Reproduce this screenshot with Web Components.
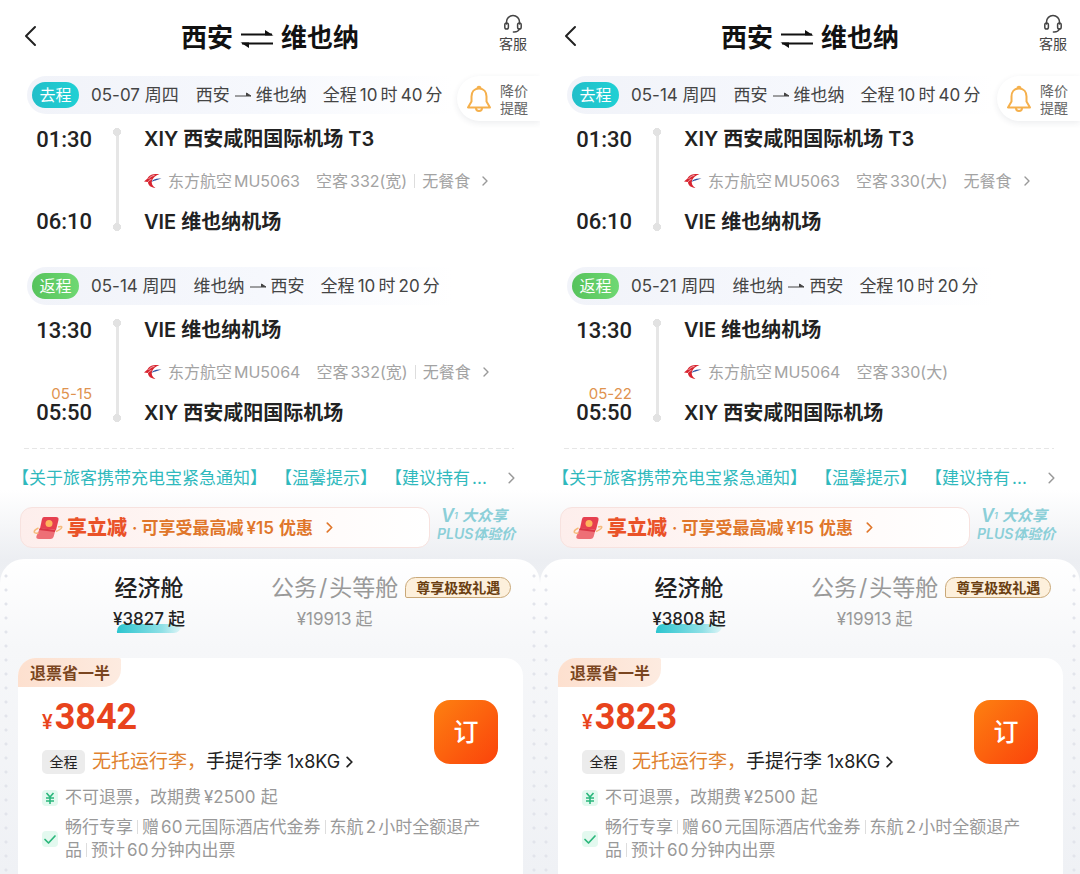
<!DOCTYPE html>
<html lang="zh-CN">
<head>
<meta charset="utf-8">
<meta name="viewport" content="width=device-width, initial-scale=1">
<title>航班预订</title>
<style>
body { margin: 0; background: #fff; font-family: Inter, "Noto Sans CJK SC", sans-serif; color: #222; }
</style>
</head>
<body>
<fare-compare>
  <fare-screen from="西安" to="维也纳">
    <flight-leg slot="legs" kind="out" label="去程" date="05-07 周四" from="西安" to="维也纳" total="全程10时40分"
      dep="01:30" arr="06:10" origin="XIY 西安咸阳国际机场 T3" dest="VIE 维也纳机场" flight="东方航空MU5063" plane="空客332(宽)" meal="无餐食" divided></flight-leg>
    <flight-leg slot="legs" kind="back" label="返程" date="05-14 周四" from="维也纳" to="西安" total="全程10时20分"
      dep="13:30" arr="05:50" nextday="05-15" origin="VIE 维也纳机场" dest="XIY 西安咸阳国际机场" flight="东方航空MU5064" plane="空客332(宽)" meal="无餐食" divided></flight-leg>
    <notice-promo slot="notice"></notice-promo>
    <cabin-tabs slot="tabs" price="3827"></cabin-tabs>
    <fare-card slot="fares" price="3842"></fare-card>
  </fare-screen>
  <fare-screen from="西安" to="维也纳">
    <flight-leg slot="legs" kind="out" label="去程" date="05-14 周四" from="西安" to="维也纳" total="全程10时40分"
      dep="01:30" arr="06:10" origin="XIY 西安咸阳国际机场 T3" dest="VIE 维也纳机场" flight="东方航空MU5063" plane="空客330(大)" meal="无餐食"></flight-leg>
    <flight-leg slot="legs" kind="back" label="返程" date="05-21 周四" from="维也纳" to="西安" total="全程10时20分"
      dep="13:30" arr="05:50" nextday="05-22" origin="VIE 维也纳机场" dest="XIY 西安咸阳国际机场" flight="东方航空MU5064" plane="空客330(大)"></flight-leg>
    <notice-promo slot="notice"></notice-promo>
    <cabin-tabs slot="tabs" price="3808"></cabin-tabs>
    <fare-card slot="fares" price="3823"></fare-card>
  </fare-screen>
</fare-compare>

<script>
const RESET = `
  * { box-sizing: border-box; }
  :host { display: block; text-autospace: normal; text-spacing-trim: space-all; font-feature-settings: "calt" 0; }
  button { font: inherit; font-feature-settings: inherit; color: inherit; background: none; border: 0; padding: 0; margin: 0; text-align: inherit; cursor: pointer; }
  a { color: inherit; text-decoration: none; }
  h1, h2, p, ul { margin: 0; padding: 0; font-size: inherit; font-weight: inherit; list-style: none; }
  svg { display: block; flex: none; }
  .n { margin: 0 3px; }
`;

const chevron = (w, h, color, sw) =>
  `<svg width="${w}" height="${h}" viewBox="0 0 6 10" fill="none" stroke="${color}" stroke-width="${sw}" stroke-linecap="round" stroke-linejoin="round" aria-hidden="true"><path d="M1 1l4 4-4 4"/></svg>`;

// Gives every figure inside Chinese text a little air on both sides.
const spaced = text => text.replace(/¥?\d+/g, m => `<span class="n">${m}</span>`);

class Base extends HTMLElement {
  connectedCallback() {
    if (this.shadowRoot) return;
    this.attachShadow({ mode: 'open' }).innerHTML = `<style>${RESET}${this.css()}</style>${this.html()}`;
  }
  at(name) { return this.getAttribute(name) || ''; }
}

customElements.define('fare-compare', class extends Base {
  css() { return `:host { display: grid; grid-template-columns: 1fr 1fr; min-height: 100vh; }`; }
  html() { return `<slot></slot>`; }
});

customElements.define('fare-screen', class extends Base {
  css() { return `
    :host { display: flex; flex-direction: column; min-width: 0; overflow: hidden; position: relative;
      background: linear-gradient(#fff 0, #fff 490px, #eceef2 560px, #f2f3f6 640px, #eef0f5 100%); }
    header { display: grid; grid-template-columns: 60px 1fr 60px; align-items: center; height: 76px; }
    .back { padding-left: 24px; height: 40px; padding-bottom: 4px; }
    h1 { display: flex; justify-content: center; align-items: center; gap: 7px; font-size: 26px; line-height: 36px; font-weight: 700; color: #111; }
    .help { justify-self: end; padding-right: 13px; display: flex; flex-direction: column; align-items: center; gap: 1px; font-size: 14px; line-height: 18px; color: #444; white-space: nowrap; padding-bottom: 10px; }
    .alert { position: absolute; right: 0; top: 76px; z-index: 1; display: flex; align-items: center; gap: 8px; height: 45px; width: 83px; padding-left: 9px;
      border-radius: 23px 0 0 23px; background: #fff; box-shadow: 0 2px 6px rgba(40,50,80,.09); font-size: 14px; line-height: 17px; color: #666; white-space: nowrap; }
    .panel { flex: 1; border-radius: 24px 24px 0 0; padding: 0 17px 0 18px;
      background: radial-gradient(circle, #e2e4eb 1px, transparent 2px) right 0 top 80px / 12px 14px repeat-y, radial-gradient(circle, #e2e4eb 1px, transparent 2px) left 0 top 80px / 12px 14px repeat-y, linear-gradient(#fff 0, #f6f7f9 90px, #eff1f5 100%); }
  `; }
  html() { return `
    <header>
      <button class="back" aria-label="返回"><svg width="13" height="22" viewBox="0 0 13 22" fill="none" stroke="#222" stroke-width="2" stroke-linecap="round" stroke-linejoin="round"><path d="M11 2L2 11l9 9"/></svg></button>
      <h1><span>${this.at('from')}</span>
        <svg width="34" height="24" viewBox="0 0 34 24" aria-label="往返"><path d="M1 8.500h31M33 17.500H2" stroke="#111" stroke-width="2"/><path d="M25 4l8.500 5.500H25zM9 22l-8.500-5.500H9z" fill="#111"/></svg>
        <span>${this.at('to')}</span></h1>
      <button class="help"><svg width="20" height="20" viewBox="0 0 20 20" fill="none" stroke="#444" stroke-width="1.500" stroke-linecap="round"><path d="M3.500 10V8a6.500 6.500 0 0 1 13 0v2"/><rect x="1.800" y="9" width="3.600" height="6" rx="1.800"/><rect x="14.600" y="9" width="3.600" height="6" rx="1.800"/><path d="M16.400 15c-.8 2-2.600 3-5.200 3h-.8" /></svg>客服</button>
    </header>
    <button class="alert"><svg width="26" height="28" viewBox="0 0 26 28" fill="none" stroke="#f5b04c" stroke-width="2" stroke-linejoin="round"><path d="M13 3.500c-5 0-7.500 3.600-7.500 8v5L2 22.500h22l-3.500-6v-5c0-4.400-2.500-8-7.500-8z"/><path d="M11.500 3.200a1.500 1.500 0 0 1 3 0M10 23a3 3 0 0 0 6 0"/></svg><span>降价<br>提醒</span></button>
    <slot name="legs"></slot>
    <slot name="notice"></slot>
    <section class="panel"><slot name="tabs"></slot><slot name="fares"></slot></section>
  `; }
});

customElements.define('flight-leg', class extends Base {
  css() { return `
    :host { margin-bottom: 30px; }
    :host([kind="back"]) { margin-bottom: 20px; }
    h2 { display: flex; align-items: center; height: 38px; margin: 0 40px 0 27px; padding-left: 5px; border-radius: 19px; white-space: nowrap;
      background: linear-gradient(90deg, #f1f3f9 0, #f6f8fd 50%, #fff 90%); font-size: 17px; line-height: 24px; color: #444; }
    h2 .n { margin: 0 1px; }
    .pill { width: 47px; height: 26px; border-radius: 13px; text-align: center; font-size: 16px; line-height: 26px; color: #fff; margin-right: 12px;
      background: linear-gradient(90deg, #22bfc9, #1fd0d4); }
    :host([kind="back"]) .pill { background: linear-gradient(90deg, #56c35c, #6fd873); }
    .route { display: flex; align-items: center; gap: 4px; margin: 0 16px 0 17px; }
    .body { display: grid; grid-template-columns: 92px 50px 1fr; height: 123px; padding-top: 9px; }
    .times { display: flex; flex-direction: column; justify-content: space-between; align-items: flex-end; height: 115px; padding-top: 1px; }
    .times time { font: 500 22px/32px Roboto, sans-serif; color: #222; display: block; }
    .arr { position: relative; }
    .next { position: absolute; right: 0; top: -11px; font-size: 15px; line-height: 16px; color: #e0934f; }
    .rail { justify-self: center; width: 8px; margin: 5px 0 6px; height: 103px;
      background: radial-gradient(circle at 4px 4px, #e2e2e2 4px, transparent 4px), radial-gradient(circle at 4px calc(100% - 4px), #e2e2e2 4px, transparent 4px), linear-gradient(#e6e6e6, #e6e6e6) center / 3px 100% no-repeat; }
    .info { display: flex; flex-direction: column; height: 115px; justify-content: space-between; padding-left: 2px; white-space: nowrap; }
    .port { font-size: 20px; line-height: 32px; font-weight: 600; color: #222; }
    .meta { display: flex; align-items: center; font-size: 16px; line-height: 24px; color: #a3a3a3; }
    .meta span { margin-right: 16px; }
    :host([divided]) .plane { margin-right: 7px; padding-right: 8px; background: linear-gradient(#ddd, #ddd) right center / 1px 14px no-repeat; }
    .meta svg:first-child { margin-right: 6px; }
    .meta .meal { margin-right: 12px; }
  `; }
  html() {
    const next = this.at('nextday'), meal = this.at('meal');
    return `
    <h2><span class="pill">${this.at('label')}</span><span>${this.at('date')}</span>
      <span class="route">${this.at('from')}<svg width="18" height="10" viewBox="0 0 18 10"><path d="M1 6h16l-4.500-3v3" fill="#444" stroke="#444" stroke-width="1"/></svg>${this.at('to')}</span><span>${spaced(this.at('total'))}</span></h2>
    <div class="body">
      <div class="times"><time>${this.at('dep')}</time><div class="arr">${next ? `<span class="next">${next}</span>` : ''}<time>${this.at('arr')}</time></div></div>
      <div class="rail"></div>
      <div class="info">
        <p class="port">${this.at('origin')}</p>
        <a class="meta" href="#"><svg width="18" height="16" viewBox="0 0 18 16" aria-hidden="true"><path d="M15.500 1C9.500.5 5 1.500 3.500 5.500L0 8.500l4 .5c0 3.500 3 5.500 7.500 6C8.500 13 7 10.500 8 7.500 9 4.500 11.500 2.500 15.500 1z" fill="#d8232f"/><path d="M4.500 6C6 3.800 8 2.800 10.500 2.400M4 8.800C5 7.500 6 6.800 7.500 6.300" stroke="#fff" stroke-width=".6" fill="none"/><path d="M17.500 5.500C12 5 8.500 6.500 7.500 9c1.500-1 6-2 10-3.500z" fill="#2c4fa0"/></svg><span>${this.at('flight')}</span><span class="plane">${this.at('plane')}</span>${meal ? `<span class="meal">${meal}</span>${chevron(6, 10, '#999', 1.4)}` : ''}</a>
        <p class="port">${this.at('dest')}</p>
      </div>
    </div>`;
  }
});

customElements.define('notice-promo', class extends Base {
  css() { return `
    :host { margin: 0 20px; padding-bottom: 11px; }
    .rule { height: 1px; margin-left: 4px; margin-right: 6px; background: repeating-linear-gradient(90deg, #e6e6e6 0 5px, transparent 5px 8px); }
    .notice { display: flex; align-items: center; justify-content: space-between; height: 58px; margin-left: -8px; padding-right: 5px; font-size: 17px; line-height: 26px; color: #2fb9bd; white-space: nowrap; }
    .notice span span { margin-right: 8px; }
    .row { display: flex; gap: 7px; }
    .promo { flex: 1; display: flex; align-items: center; height: 41px; border: 1px solid #f7e2df; border-radius: 12px; padding-left: 12px; white-space: nowrap;
      background: linear-gradient(90deg, #fdeeec, #fff8f6 50%, #fff); color: #e0762a; font-size: 17px; line-height: 24px; font-weight: 600; }
    .promo b { font-size: 20px; color: #ea5228; margin: 0 5px 0 4px; }
    .promo i { font-style: normal; margin-right: 4px; }
    .promo svg:last-child { margin-left: 13px; }
    .plus { width: 83px; font-size: 15px; line-height: 18px; font-weight: 600; font-style: italic; color: #8bcfd8; white-space: nowrap; text-autospace: no-autospace; }
    .plus p { height: 18px; display: flex; align-items: center; }
    .plus p:first-child { padding-left: 4px; }
    .plus p:last-child { font-size: 14px; }
    .plus small { font-size: 9px; margin-right: 4px; }
    .plus .v { font-size: 18px; }
  `; }
  html() { return `
    <div class="rule"></div>
    <a class="notice" href="#"><span><span>【关于旅客携带充电宝紧急通知】</span><span>【温馨提示】</span>【建议持有...</span>${chevron(7, 12, '#999', 1.3)}</a>
    <div class="row">
      <button class="promo"><svg width="30" height="26" viewBox="0 0 30 26" aria-hidden="true"><path d="M11 2h12q3 0 2.500 3L23 15 7 13.500 9 4q.5-2 2-2z" fill="#e63f4f"/><path d="M7 13l15.500 2-2 7q-.7 2-3 2H6q-3.500 0-2.500-3z" fill="#ee6f76"/><path d="M7 13l15.500 2-.6 2L6 15z" fill="#d93545"/><circle cx="16" cy="8.500" r="3.500" fill="#ffb45c"/><path d="M5.500 18C-1 19 .5 15 5.500 13M25 12c6-2 4.500 2-2 4.500" stroke="#f5bb7c" stroke-width="1.500" fill="none"/></svg><b>享立减</b><i>·</i><span>${spaced('可享受最高减¥15优惠')}</span>${chevron(7, 11, '#e0762a', 1.5)}</button>
      <div class="plus"><p><span class="v">V</span><small>1</small>大众享</p><p>PLUS体验价</p></div>
    </div>
  `; }
});

customElements.define('cabin-tabs', class extends Base {
  css() { return `
    :host { display: flex; height: 99px; padding-top: 14px; white-space: nowrap; box-sizing: border-box; }
    button { display: flex; flex-direction: column; align-items: center; height: 60px; }
    .eco { width: 262px; color: #222; font-weight: 500; }
    .biz { color: #999; position: relative; margin-right: auto; margin-left: -9px; }
    .name { font-size: 23px; line-height: 30px; }
    .slash { margin: 0 2px; }
    .price { font-size: 17px; line-height: 24px; margin-top: 4px; }
    .price .n { margin-left: 0; margin-right: 2px; }
    .eco .price { position: relative; isolation: isolate; }
    .eco .price::before { content: ""; position: absolute; z-index: -1; left: 4px; right: 4px; bottom: -2px; height: 9px; border-radius: 8px 2px 8px 0; background: linear-gradient(90deg, #2cc5cf, #8fe0e6 70%, #dff5f7); }
    .badge { position: absolute; left: calc(100% + 7px); top: 4px; width: 106px; height: 21px; border: 1px solid #c9a878; border-radius: 11px 11px 11px 2px; background: #fdf0dc; color: #6b3f12; font-size: 14px; line-height: 19px; font-weight: 700; text-align: center; }
  `; }
  html() { return `
    <button class="eco" aria-pressed="true"><span class="name">经济舱</span><span class="price">${spaced('¥' + this.at('price') + '起')}</span></button>
    <button class="biz" aria-pressed="false"><span class="name">公务<span class="slash">/</span>头等舱</span><span class="price">${spaced('¥19913起')}</span><span class="badge">尊享极致礼遇</span></button>
  `; }
});

customElements.define('fare-card', class extends Base {
  css() { return `
    :host { background: #fff; border-radius: 18px 18px 0 0; min-height: 216px; }
    .tag { width: 103px; height: 29px; border-radius: 18px 2px 18px 0; background: linear-gradient(90deg, #fde0cf, #fdebe0); color: #7a4520; font-size: 16px; line-height: 30px; font-weight: 700; padding-left: 12px; white-space: nowrap; }
    .top { display: flex; justify-content: space-between; padding: 0 25px 0 24px; }
    .cost { color: #e8431c; font: 700 36px/44px Roboto, sans-serif; padding-top: 8px; white-space: nowrap; }
    .cost small { font-size: 20px; font-weight: 500; margin-right: 2px; }
    .bag { display: flex; align-items: center; font-size: 19px; line-height: 28px; color: #222; white-space: nowrap; margin-top: 4px; }
    .bag i { font-style: normal; font-size: 14px; line-height: 24px; width: 43px; text-align: center; background: #ececec; border-radius: 5px; margin-right: 7px; }
    .bag em { font-style: normal; color: #e0822f; }
    .bag svg { margin-left: 6px; }
    .bag .lat { font-size: 18px; margin-left: 5px; }
    .book { margin-top: 13px; width: 64px; height: 64px; border-radius: 16px; background: linear-gradient(135deg, #fd8011, #fb430b); color: #fff; font-size: 25px; line-height: 64px; text-align: center; font-weight: 500; }
    ul { padding: 10px 32px 0 24px; font-size: 17px; line-height: 23px; color: #999; }
    li { display: flex; align-items: center; gap: 7px; margin-bottom: 7px; }
    li svg { background: #e3f9ef; border-radius: 4px; }
    li i { display: inline-block; width: 1px; height: 14px; background: #ddd; margin: 0 4px; vertical-align: -1px; }
  `; }
  html() { return `
    <div class="tag">退票省一半</div>
    <div class="top">
      <div><div class="cost"><small>¥</small>${this.at('price')}</div>
        <a class="bag" href="#"><i>全程</i><em>无托运行李，</em>手提行李<span class="lat">1x8KG</span>${chevron(7, 12, '#222', 1.5)}</a></div>
      <button class="book">订</button>
    </div>
    <ul>
      <li><svg width="16" height="16" viewBox="0 0 16 16" fill="none" stroke="#2bb77c" stroke-width="1.600" aria-hidden="true"><path d="M4.500 3L8 7l3.500-4M8 7v7M4 8h8M4 11h8"/></svg><span>${spaced('不可退票，改期费¥2500起')}</span></li>
      <li><svg width="16" height="16" viewBox="0 0 16 16" fill="none" stroke="#2bb77c" stroke-width="1.700" stroke-linecap="round" stroke-linejoin="round" aria-hidden="true"><path d="M3 8.500L6.500 12 13 5"/></svg><span>${'畅行专享|赠60元国际酒店代金券|东航2小时全额退产品|预计60分钟内出票'.replaceAll('|', '<i></i>')}</span></li>
    </ul>
  `; }
});
</script>
</body>
</html>
